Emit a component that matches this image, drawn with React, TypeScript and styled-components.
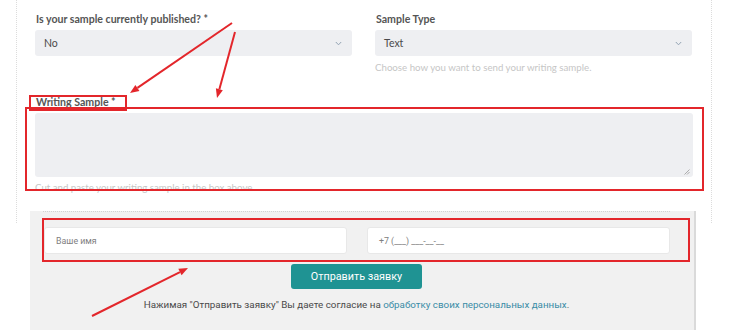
import React from "react";
import styled, { createGlobalStyle } from "styled-components";

const Global = createGlobalStyle`
  html, body { margin: 0; padding: 0; background: #ffffff; }
  body { width: 730px; height: 330px; overflow: hidden; }
  * { box-sizing: border-box; }
`;

const Frame = styled.div`
  position: relative;
  width: 730px;
  height: 330px;
  overflow: hidden;
`;

const Page = styled.div`
  margin-left: 16px;
  width: 696px;
  height: 223px;
  border-left: 1px dotted #dcdcdc;
  border-right: 1px dotted #dcdcdc;
  padding: 12px 18px 0 18px;
  font-family: Lato, "Open Sans", sans-serif;
`;

const Row = styled.div`
  display: grid;
  grid-template-columns: 317px 317px;
  column-gap: 23px;
`;

const Field = styled.div`
  display: flex;
  flex-direction: column;
`;

const Label = styled.div`
  font-size: 10.6px;
  font-weight: 700;
  color: #555555;
  line-height: 14px;
  height: 18px;
  padding-left: 1px;
`;

const Select = styled.div`
  height: 26px;
  background: #eeeff2;
  border-radius: 3px;
  display: flex;
  align-items: center;
  justify-content: space-between;
  padding: 0 10px 0 9px;
  font-size: 10.5px;
  color: #4a4a4a;
`;

const Help = styled.div<{ $top?: number }>`
  font-size: 9.7px;
  color: #c6c6c6;
  line-height: 13px;
  margin-top: ${(p) => p.$top ?? 5}px;
`;

const WritingField = styled(Field)`
  margin-top: 21px;
`;

const TextArea = styled.div`
  height: 64px;
  background: #eeeff2;
  border-radius: 3px;
  position: relative;
`;

const Grip = styled.svg`
  position: absolute;
  right: 3px;
  bottom: 2px;
`;

const Panel = styled.div`
  margin: -25px 0 0 30px;
  width: 666px;
  height: 127px;
  background-color: #f1f1f1;
  background-image: radial-gradient(#e4e4e4 0.6px, transparent 0.7px);
  background-size: 4px 4px;
  border-right: 2px solid #dadada;
  padding: 0 24px 0 13px;
  font-family: Roboto, "Liberation Sans", sans-serif;
`;

const PanelInner = styled.div`
  margin-top: 13px;
  border-top: 1px dotted #d2d2d2;
  padding-top: 15px;
  display: flex;
  flex-direction: column;
  align-items: center;
`;

const Inputs = styled.div`
  width: 100%;
  display: grid;
  grid-template-columns: 1fr 1fr;
  column-gap: 20px;
  padding-left: 1px;
`;

const Input = styled.div`
  height: 27px;
  background: #ffffff;
  border: 1px solid #e8e8e8;
  border-radius: 3px;
  display: flex;
  align-items: center;
  padding-left: 11px;
  font-size: 8.8px;
  color: #808080;
`;

const Button = styled.div`
  margin-top: 10px;
  width: 131px;
  height: 25px;
  background: #1f9393;
  border-radius: 3px;
  color: #ffffff;
  font-size: 10.8px;
  display: flex;
  align-items: center;
  justify-content: center;
`;

const Consent = styled.div`
  margin-top: 9px;
  font-size: 9.8px;
  color: #4a4a4a;
  line-height: 14px;
`;

const Link = styled.span`
  color: #3a8ca6;
`;

const Overlay = styled.svg`
  position: absolute;
  left: 0;
  top: 0;
  pointer-events: none;
`;

const Chevron = () => (
  <svg width="7" height="5" viewBox="0 0 7 5">
    <path d="M0.8 1 L3.5 3.8 L6.2 1" fill="none" stroke="#93a3b3" strokeWidth="1" />
  </svg>
);

const RED = "#e3262b";

const Arrow = ({ x1, y1, x2, y2 }: { x1: number; y1: number; x2: number; y2: number }) => {
  const a = Math.atan2(y2 - y1, x2 - x1);
  const L = 9;
  const W = 3.6;
  const bx = x2 - L * Math.cos(a);
  const by = y2 - L * Math.sin(a);
  const px = -Math.sin(a) * W;
  const py = Math.cos(a) * W;
  return (
    <g>
      <line x1={x1} y1={y1} x2={bx} y2={by} stroke={RED} strokeWidth={2} />
      <polygon points={`${x2},${y2} ${bx + px},${by + py} ${bx - px},${by - py}`} fill={RED} />
    </g>
  );
};

export default function App() {
  return (
    <Frame>
      <Global />
      <Page>
        <Row>
          <Field>
            <Label>Is your sample currently published? *</Label>
            <Select>
              <span>No</span>
              <Chevron />
            </Select>
          </Field>
          <Field>
            <Label>Sample Type</Label>
            <Select>
              <span>Text</span>
              <Chevron />
            </Select>
            <Help>Choose how you want to send your writing sample.</Help>
          </Field>
        </Row>
        <WritingField>
          <Label>Writing Sample *</Label>
          <TextArea>
            <Grip width="6" height="6" viewBox="0 0 6 6">
              <path d="M0.5 5.5 L5.5 0.5 M3 5.5 L5.5 3" stroke="#9a9a9a" strokeWidth="0.8" />
            </Grip>
          </TextArea>
          <Help $top={4}>Cut and paste your writing sample in the box above.</Help>
        </WritingField>
      </Page>
      <Panel>
        <PanelInner>
          <Inputs>
            <Input>Ваше имя</Input>
            <Input>+7 (___) ___-__-__</Input>
          </Inputs>
          <Button>Отправить заявку</Button>
          <Consent>
            Нажимая "Отправить заявку" Вы даете согласие на <Link>обработку своих персональных данных</Link>.
          </Consent>
        </PanelInner>
      </Panel>
      <Overlay width="730" height="330" viewBox="0 0 730 330">
        <rect x={30} y={96} width={96} height={14} fill="none" stroke={RED} strokeWidth={2} />
        <rect x={26} y={108} width={677} height={82} fill="none" stroke={RED} strokeWidth={2} />
        <rect x={43} y={219} width={646} height={42} fill="none" stroke={RED} strokeWidth={2} />
        <Arrow x1={232} y1={23} x2={130} y2={93} />
        <Arrow x1={235} y1={32} x2={217} y2={98} />
        <Arrow x1={92} y1={316} x2={188} y2={268} />
      </Overlay>
    </Frame>
  );
}
